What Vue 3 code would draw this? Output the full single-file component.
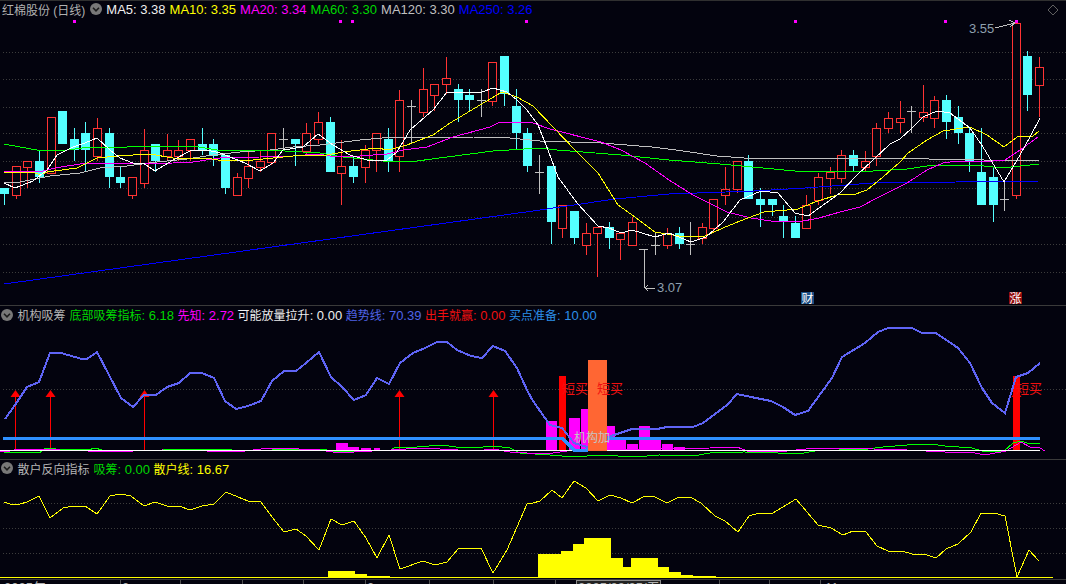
<script setup>
const BG = '#03030e'

// [序号, 实体上, 实体下, 影线上, 影线下, 类型] r=阳 c=阴 g=十字
const candles = [
  [0,188,194,188,205,'c'],[1,166,195,166,199,'r'],[2,161,167,161,188,'r'],[3,161,177,150,183,'c'],
  [4,117,173,117,173,'r'],[5,111,144,111,144,'c'],[6,139,150,128,161,'c'],[7,133,150,122,172,'c'],
  [8,128,156,118,161,'r'],[9,133,177,128,188,'c'],[10,177,183,167,188,'c'],[11,177,195,177,199,'r'],
  [12,150,183,129,188,'r'],[13,144,161,144,172,'c'],[14,150,156,134,161,'r'],[15,150,156,140,161,'r'],
  [16,139,150,139,161,'r'],[17,144,150,128,155,'c'],[18,144,156,139,166,'c'],[19,155,188,155,194,'c'],
  [20,177,195,173,195,'r'],[21,166,178,152,188,'r'],[22,161,167,150,172,'r'],[23,133,162,133,165,'r'],
  [24,139,139,128,150,'g'],[25,139,144,139,166,'c'],[26,133,151,123,156,'r'],[27,122,139,112,144,'r'],
  [28,122,172,117,172,'c'],[29,166,173,140,205,'r'],[30,166,177,156,183,'c'],[31,150,167,145,183,'r'],
  [32,133,150,133,172,'r'],[33,139,161,128,172,'c'],[34,100,156,90,172,'r'],[35,106,106,100,144,'g'],
  [36,89,112,68,117,'r'],[37,84,95,84,111,'r'],[38,78,84,57,94,'r'],[39,89,100,84,122,'c'],
  [40,95,100,89,111,'c'],[41,100,100,89,117,'g'],[42,62,101,62,106,'r'],[43,56,94,56,106,'c'],
  [44,106,133,89,149,'c'],[45,133,166,128,172,'c'],[46,172,172,155,194,'g'],[47,166,222,166,244,'c'],
  [48,205,228,205,238,'r'],[49,211,238,211,244,'c'],[50,233,245,223,255,'r'],[51,227,233,227,277,'r'],
  [52,227,238,222,249,'c'],[53,233,239,233,260,'r'],[54,222,245,217,245,'r'],[56,245,245,233,255,'g'],
  [57,233,245,228,249,'r'],[58,233,244,227,249,'c'],[59,244,244,222,255,'g'],[60,227,238,223,244,'r'],
  [61,199,228,199,233,'r'],[62,189,195,167,205,'r'],[63,161,189,161,193,'r'],[64,161,199,155,199,'c'],
  [65,199,205,188,227,'c'],[66,199,205,199,216,'c'],[67,216,221,205,238,'c'],[68,223,238,216,238,'c'],
  [69,205,228,195,228,'r'],[70,177,200,173,205,'r'],[71,172,178,167,194,'r'],[72,155,178,150,183,'r'],
  [73,155,166,150,172,'c'],[74,161,167,151,172,'r'],[75,128,156,123,166,'r'],[76,118,128,112,133,'r'],
  [77,118,122,101,133,'r'],[78,111,111,106,133,'g'],[79,112,117,85,122,'r'],[80,100,118,96,128,'r'],
  [81,100,122,95,139,'c'],[82,117,133,106,144,'c'],[83,133,161,127,172,'c'],[84,172,205,128,205,'c'],
  [85,177,205,167,222,'c'],[86,199,199,180,211,'g'],[87,23,195,23,199,'r'],[88,56,95,51,111,'c'],
  [89,67,85,57,117,'r']
]

const candleX = i => Math.round(4 + 11.63 * i)

const ma5 = [[4,183],[15,188],[33,181],[47,170],[57,155],[73,147],[85,143],[97,138],[110,150],[120,158],[133,163],[143,163],[155,171],[173,160],[190,151],[207,150],[220,153],[245,163],[260,171],[273,163],[283,150],[303,147],[318,134],[333,145],[350,155],[367,160],[387,160],[397,152],[410,130],[433,110],[447,92],[467,92],[482,92],[493,88],[507,92],[517,100],[527,110],[538,125],[548,150],[558,177],[577,203],[598,226],[609,228],[621,233],[632,230],[655,237],[669,233],[691,242],[706,237],[723,222],[740,200],[761,191],[778,193],[795,213],[808,216],[819,208],[840,193],[857,175],[873,160],[890,144],[900,139],[912,128],[923,117],[937,111],[950,113],[970,128],[983,147],[1004,182],[1020,155],[1030,137],[1040,118]]
const ma10 = [[4,172],[33,172],[40,175],[47,172],[77,168],[97,158],[117,156],[150,154],[173,158],[207,158],[223,161],[253,160],[293,156],[327,155],[343,152],[360,150],[377,148],[388,150],[407,145],[433,135],[450,123],[480,105],[502,92],[517,97],[533,106],[553,127],[577,152],[598,173],[618,205],[635,217],[655,232],[679,236],[703,237],[723,228],[740,221],[764,212],[798,209],[815,202],[840,194],[853,195],[867,190],[883,177],[900,162],[908,153],[927,140],[943,131],[970,127],[987,135],[1004,147],[1017,137],[1033,136],[1039,131]]
const ma20 = [[4,171],[43,171],[55,168],[80,164],[103,163],[133,164],[173,163],[193,162],[220,158],[260,157],[293,156],[317,154],[330,156],[360,156],[387,154],[403,150],[427,147],[453,137],[490,127],[500,122],[533,123],[550,129],[601,142],[621,150],[645,163],[669,180],[693,195],[727,212],[751,218],[771,221],[798,222],[819,218],[840,212],[860,207],[877,198],[907,183],[927,170],[943,163],[957,161],[993,161],[1005,160],[1020,150],[1038,137]]
const ma60 = [[4,144],[20,147],[37,150],[67,150],[90,147],[127,147],[140,146],[193,146],[217,150],[267,150],[320,153],[343,157],[383,161],[417,161],[447,157],[493,151],[540,148],[557,150],[621,155],[669,160],[720,164],[795,171],[839,171],[873,171],[907,169],[934,165],[975,165],[1002,168],[1039,164]]
const ma120 = [[4,183],[20,182],[50,176],[80,173],[100,168],[127,166],[157,162],[187,159],[213,155],[240,152],[270,150],[293,147],[320,145],[360,140],[393,137],[473,137],[510,138],[540,141],[601,143],[652,147],[676,150],[717,156],[744,158],[873,158],[1039,161]]
const ma250 = [[4,284],[533,211],[615,199],[669,194],[754,191],[805,188],[873,183],[1039,181]]

const trend = [[5,419],[15,405],[27,387],[39,382],[50,353],[61,353],[82,359],[87,359],[97,352],[109,375],[121,398],[133,407],[144,395],[156,395],[167,387],[179,383],[190,373],[202,373],[214,378],[225,401],[236,409],[248,406],[261,401],[272,381],[284,371],[296,371],[306,363],[319,352],[331,377],[342,387],[354,400],[366,395],[377,378],[389,384],[400,363],[413,353],[425,348],[437,342],[447,342],[457,350],[471,356],[482,358],[493,346],[505,351],[517,368],[527,390],[533,401],[550,425],[562,428],[574,443],[587,447],[611,436],[632,429],[657,429],[667,427],[693,427],[703,423],[727,405],[737,394],[751,397],[771,401],[783,407],[795,415],[808,411],[832,378],[842,357],[865,343],[878,332],[888,328],[912,328],[922,333],[936,333],[958,348],[970,363],[982,388],[992,403],[1005,413],[1016,377],[1028,373],[1040,363]]
const buyLine = [[3,438],[562,438],[574,450],[587,450],[600,438],[1040,438]]
const lowGreen = [[4,453],[15,452],[34,452],[39,453],[46,448],[50,448],[56,449],[88,450],[95,448],[102,450],[119,451],[163,450],[185,449],[218,449],[245,451],[299,449],[321,449],[333,451],[354,452],[391,450],[396,447],[417,447],[442,445],[456,447],[483,447],[493,446],[510,448],[520,453],[550,455],[574,457],[601,455],[635,457],[659,455],[693,456],[710,453],[744,452],[778,453],[798,454],[815,451],[839,450],[868,449],[883,447],[907,445],[931,444],[945,446],[972,448],[982,451],[1004,451],[1013,443],[1021,441],[1030,444],[1040,443]]
const lowMagenta = [[0,451],[7,452],[17,449],[34,450],[46,449],[60,450],[88,451],[109,452],[133,451],[162,450],[207,451],[231,452],[245,451],[269,448],[299,449],[320,450],[333,452],[354,452],[391,450],[422,448],[476,451],[493,449],[510,452],[527,453],[553,453],[574,450],[710,448],[737,447],[747,451],[778,452],[815,448],[842,448],[873,449],[907,450],[945,452],[975,453],[985,455],[1006,451],[1021,442],[1030,447],[1040,448],[1045,451]]
const retail = [[4,502],[10,504],[20,504],[27,502],[39,496],[50,518],[63,508],[73,506],[85,506],[97,514],[110,496],[121,494],[131,496],[144,506],[155,502],[167,506],[179,506],[190,510],[202,506],[214,504],[226,492],[238,497],[248,501],[261,502],[272,517],[284,532],[296,529],[306,536],[319,550],[331,519],[342,525],[354,521],[366,538],[377,558],[389,535],[400,569],[423,561],[435,565],[447,562],[459,548],[481,548],[493,573],[507,550],[527,504],[533,503],[540,501],[552,490],[562,498],[574,481],[586,488],[598,501],[610,495],[621,498],[632,503],[645,496],[655,497],[667,503],[679,497],[690,497],[701,503],[715,516],[725,521],[738,532],[749,516],[759,513],[773,513],[796,499],[818,525],[831,528],[843,535],[853,531],[866,532],[877,546],[888,551],[902,551],[912,554],[924,554],[936,558],[946,549],[958,544],[971,532],[981,513],[994,513],[1005,516],[1017,577],[1029,550],[1039,561]]

const toPts = list => list.map(p => p.join(',')).join(' ')

const maLines = [
  { pts: toPts(ma250), color: '#0000ff' },
  { pts: toPts(ma120), color: '#c0c0c0' },
  { pts: toPts(ma60), color: '#00ff00' },
  { pts: toPts(ma20), color: '#ff00ff' },
  { pts: toPts(ma10), color: '#ffff00' },
  { pts: toPts(ma5), color: '#ffffff' }
]

const mainGrid = [52, 79, 107, 133, 161, 188, 217, 244, 272]
const topDots = [74, 340, 352, 526, 795, 945, 1016]

// 机构吸筹柱 [左, 右, 顶]
const pinkBars = [[336,348,443],[348,359,447],[361,371,448],[374,380,448],[546,557,421],[569,580,418],[581,588,409],[607,615,426],[615,626,439],[627,638,444],[639,650,426],[650,661,439],[662,673,444],[674,685,447]]
const arrows = [15, 50, 144, 399, 493, 1016]
const tags = [{ x: 562, t: '短买' }, { x: 597, t: '短买' }, { x: 1016, t: '短买' }]

const yellowBars = [[328,355,571],[355,367,574],[367,390,576],[538,561,554],[561,573,551],[573,584,544],[584,611,538],[611,623,558],[623,631,567],[631,658,558],[658,669,567],[669,681,572],[681,693,575],[693,716,576]]
const retailGrid = [503, 528, 553]

const axisTicks = [120, 180, 242, 303, 365, 429, 493, 555, 719, 769, 820]
const axisLabels = [{ x: 4, t: '2025年' }, { x: 122, t: '2' }, { x: 367, t: '3' }, { x: 825, t: '11' }]

const maItems = [
  { name: 'MA5', val: '3.38', color: '#f0f0f0' },
  { name: 'MA10', val: '3.35', color: '#ffff00' },
  { name: 'MA20', val: '3.34', color: '#ff00ff' },
  { name: 'MA60', val: '3.30', color: '#00d800' },
  { name: 'MA120', val: '3.30', color: '#c0c0c0' },
  { name: 'MA250', val: '3.26', color: '#0000ff' }
]
const jigouItems = [
  { name: '底部吸筹指标', val: '6.18', color: '#00d800' },
  { name: '先知', val: '2.72', color: '#ff00ff' },
  { name: '可能放量拉升', val: '0.00', color: '#f0f0f0' },
  { name: '趋势线', val: '70.39', color: '#5064e6' },
  { name: '出手就赢', val: '0.00', color: '#f01010' },
  { name: '买点准备', val: '10.00', color: '#2c8ee8' }
]
const sanhuItems = [
  { name: '吸筹', val: '0.00', color: '#00d800' },
  { name: '散户线', val: '16.67', color: '#ffff00' }
]
</script>

<template>
  <div class="page" :style="{ background: BG }">
    <!-- 主图 -->
    <section class="panel main">
      <svg class="chart" width="1066" height="305" viewBox="0 0 1066 305" shape-rendering="crispEdges">
        <line x1="0" y1="0.5" x2="1066" y2="0.5" stroke="#303030" />
        <line v-for="y in mainGrid" :key="y" x1="3" :y1="y + 0.5" x2="1066" :y2="y + 0.5" class="grid" />
        <rect v-for="x in topDots" :key="x" :x="x - 1" y="20" width="3" height="3" fill="#ff00ff" />

        <g v-for="c in candles" :key="c[0]">
          <template v-if="c[5] === 'r'">
            <line :x1="candleX(c[0]) + 0.5" :y1="c[3]" :x2="candleX(c[0]) + 0.5" :y2="c[1]" stroke="#ff3333" />
            <line :x1="candleX(c[0]) + 0.5" :y1="c[2]" :x2="candleX(c[0]) + 0.5" :y2="c[4]" stroke="#ff3333" />
            <rect :x="candleX(c[0]) - 3.5" :y="c[1] + 0.5" width="8" :height="c[2] - c[1]" :fill="BG" stroke="#ff3333" />
          </template>
          <template v-else-if="c[5] === 'c'">
            <line :x1="candleX(c[0]) + 0.5" :y1="c[3]" :x2="candleX(c[0]) + 0.5" :y2="c[4]" stroke="#54ffff" />
            <rect :x="candleX(c[0]) - 4" :y="c[1]" width="9" :height="c[2] - c[1]" fill="#54ffff" />
          </template>
          <template v-else>
            <line :x1="candleX(c[0]) + 0.5" :y1="c[3]" :x2="candleX(c[0]) + 0.5" :y2="c[4]" stroke="#c0c0c0" />
            <line :x1="candleX(c[0]) - 4" :y1="c[1] + 0.5" :x2="candleX(c[0]) + 5" :y2="c[1] + 0.5" stroke="#c0c0c0" />
          </template>
        </g>

        <polyline v-for="l in maLines" :key="l.color" :points="l.pts" fill="none" :stroke="l.color" />

        <!-- 最高最低价标注 -->
        <text x="969" y="33" class="price">3.55</text>
        <polyline points="995,28 1015,23" fill="none" stroke="#c0c0c0" />
        <polyline points="1009,20 1015,23 1010,27" fill="none" stroke="#c0c0c0" />
        <line x1="639" y1="249.5" x2="648" y2="249.5" stroke="#c0c0c0" />
        <line x1="644.5" y1="249" x2="644.5" y2="288" stroke="#c0c0c0" />
        <line x1="645" y1="288.5" x2="655" y2="288.5" stroke="#c0c0c0" />
        <polyline points="648,285 645,288 648,291" fill="none" stroke="#c0c0c0" />
        <text x="657" y="292" class="price">3.07</text>

        <rect x="801" y="292" width="13" height="12" fill="#1b4f86" />
        <text x="801.5" y="302.5" class="badge">财</text>
        <rect x="1009" y="292" width="13" height="12" fill="#920c0c" />
        <text x="1009.5" y="302.5" class="badge">涨</text>

        <polygon points="1053,5 1058,10 1053,15 1048,10" fill="none" stroke="#606060" shape-rendering="auto" />
      </svg>

      <header class="legend first">
        <span class="stock">红棉股份 (日线)</span>
        <svg class="toggle" width="12" height="12" viewBox="0 0 12 12">
          <circle cx="6" cy="6" r="6" fill="#787878" />
          <path d="M3 4.8 L6 7.8 L9 4.8" fill="none" stroke="#1c1c1c" stroke-width="1.6" />
        </svg>
        <span v-for="m in maItems" :key="m.name" :style="{ color: m.color }">{{ m.name }}: {{ m.val }}</span>
      </header>
    </section>

    <!-- 机构吸筹 -->
    <section class="panel jigou">
      <svg class="chart" width="1066" height="153" viewBox="0 306 1066 153" shape-rendering="crispEdges">
        <line x1="3" y1="389.5" x2="1066" y2="389.5" class="grid" />
        <rect v-for="b in pinkBars" :key="b[0]" :x="b[0]" :y="b[2]" :width="b[1] - b[0]" :height="451 - b[2]" fill="#ff00ff" />
        <rect x="559" y="376" width="7" height="75" fill="#ff0000" />
        <rect x="1013" y="376" width="7" height="75" fill="#ff0000" />

        <g v-for="x in arrows" :key="x">
          <line :x1="x + 0.5" y1="396" :x2="x + 0.5" y2="451" stroke="#ff0000" />
          <polygon :points="`${x + 0.5},390 ${x + 5.5},397 ${x - 4.5},397`" fill="#ff0000" shape-rendering="auto" />
        </g>

        <polyline :points="toPts(lowGreen)" fill="none" stroke="#00ff00" />
        <polyline :points="toPts(lowMagenta)" fill="none" stroke="#ff00ff" />
        <line x1="0" y1="450.5" x2="1040" y2="450.5" stroke="#ffffff" />
        <polyline :points="toPts(buyLine)" fill="none" stroke="#2e90ff" stroke-width="3" />
        <polyline :points="toPts(trend)" fill="none" stroke="#5f64f5" stroke-width="2" />
        <rect x="588" y="360" width="19" height="91" fill="#ff6633" />

        <text v-for="t in tags" :key="t.x" :x="t.x" y="393" class="tag">{{ t.t }}</text>
        <text x="574" y="442" class="add">机构加</text>
      </svg>

      <header class="legend">
        <svg class="toggle side" width="12" height="12" viewBox="0 0 12 12">
          <circle cx="6" cy="6" r="6" fill="#787878" />
          <path d="M3 4.8 L6 7.8 L9 4.8" fill="none" stroke="#1c1c1c" stroke-width="1.6" />
        </svg>
        <span class="cn title">机构吸筹</span>
        <span v-for="m in jigouItems" :key="m.name" :style="{ color: m.color }"><span class="cn">{{ m.name }}</span>: {{ m.val }}</span>
      </header>
    </section>

    <!-- 散户反向指标 -->
    <section class="panel sanhu">
      <svg class="chart" width="1066" height="119" viewBox="0 460 1066 119" shape-rendering="crispEdges">
        <line v-for="y in retailGrid" :key="y" x1="3" :y1="y + 0.5" x2="1066" :y2="y + 0.5" class="grid" />
        <rect v-for="b in yellowBars" :key="b[0]" :x="b[0]" :y="b[2]" :width="b[1] - b[0]" :height="577 - b[2]" fill="#ffff00" />
        <line x1="0" y1="577.5" x2="1053" y2="577.5" stroke="#ffff00" />
        <polyline :points="toPts(retail)" fill="none" stroke="#ffff00" />
      </svg>

      <header class="legend short">
        <svg class="toggle side" width="12" height="12" viewBox="0 0 12 12">
          <circle cx="6" cy="6" r="6" fill="#787878" />
          <path d="M3 4.8 L6 7.8 L9 4.8" fill="none" stroke="#1c1c1c" stroke-width="1.6" />
        </svg>
        <span class="cn title">散户反向指标</span>
        <span v-for="m in sanhuItems" :key="m.name" :style="{ color: m.color }"><span class="cn">{{ m.name }}</span>: {{ m.val }}</span>
      </header>
    </section>

    <!-- 时间轴,只露出顶部几个像素 -->
    <svg class="axis" width="1066" height="4" viewBox="0 580 1066 4">
      <line v-for="x in axisTicks" :key="x" :x1="x + 0.5" y1="580" :x2="x + 0.5" y2="584" stroke="#505050" />
      <text v-for="l in axisLabels" :key="l.x" :x="l.x" y="591.5" class="tick">{{ l.t }}</text>
      <rect x="576.5" y="580.5" width="84" height="10" fill="#222" stroke="#8a8a8a" />
      <text x="578" y="591.5" class="tick">2025/09/05/五</text>
    </svg>
  </div>
</template>

<style scoped>
.page {
  width: 1066px;
  height: 584px;
  display: flex;
  flex-direction: column;
  overflow: hidden;
  font-family: "Liberation Sans", "Noto Sans CJK SC", sans-serif;
  font-size: 13px;
}

.panel {
  position: relative;
  flex: none;
  border-bottom: 1px solid #3a3a3a;
}

.chart,
.axis {
  display: block;
}

.legend {
  position: absolute;
  top: 0;
  left: 1px;
  height: 17px;
  display: flex;
  align-items: center;
  gap: 3.5px;
  white-space: nowrap;
}

.legend.first {
  left: 2px;
  height: 18px;
  gap: 4px;
}

.legend.short {
  height: 16px;
}

.cn {
  font-size: 12px;
}

.stock {
  font-size: 12px;
  color: #b0b0b0;
}

.title {
  color: #b4b4b4;
  margin-right: 0.5px;
}

.toggle {
  flex: none;
  margin: 0 0 0 1px;
}

.toggle.side {
  margin: 0 1px 0 0;
}

.grid {
  stroke: #3c3c3c;
  stroke-dasharray: 1 2;
}

.price {
  font-size: 13px;
  fill: #8fa0ae;
}

.badge {
  font-size: 12px;
  fill: #ffffff;
}

.tag {
  font-size: 13px;
  fill: #f01010;
}

.add {
  font-size: 12px;
  fill: #c4c4c4;
}

.tick {
  font-size: 13px;
  fill: #b0b0b0;
}
</style>
